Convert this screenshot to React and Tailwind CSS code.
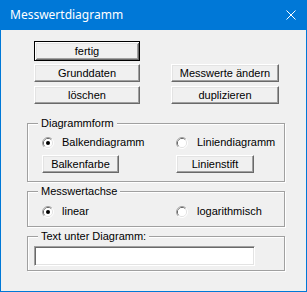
import React from "react";

const btn =
  "flex items-center justify-center h-[18px] border border-t-white border-l-white border-r-[#696969] border-b-[#696969] shadow-[inset_-1px_-1px_#a0a0a0,inset_1px_1px_#e3e3e3] bg-[#f0f0f0]";

const Radio = ({ checked }) => (
  <svg width="12" height="12" viewBox="0 0 12 12" className="shrink-0">
    <path d="M2.11 9.89 A5.5 5.5 0 0 1 9.89 2.11" fill="none" stroke="#a0a0a0" />
    <path d="M9.89 2.11 A5.5 5.5 0 0 1 2.11 9.89" fill="none" stroke="#ffffff" />
    <path d="M2.82 9.18 A4.5 4.5 0 0 1 9.18 2.82" fill="none" stroke="#696969" />
    <path d="M9.18 2.82 A4.5 4.5 0 0 1 2.82 9.18" fill="none" stroke="#e3e3e3" />
    <circle cx="6" cy="6" r="4" fill="#ffffff" />
    {checked && <circle cx="6" cy="6" r="2" fill="#000000" />}
  </svg>
);

const Group = ({ label, className, children }) => (
  <div
    className={`relative ml-[26px] w-[258px] border border-[#a0a0a0] shadow-[inset_1px_1px_#ffffff,1px_1px_#ffffff] ${className}`}
  >
    {/* legend sits over the top line */}
    <span className="absolute -top-[8px] left-[10px] bg-[#f0f0f0] px-[3px] leading-[14px]">
      {label}
    </span>
    {children}
  </div>
);

export default function App() {
  return (
    <div
      className="w-[307px] h-[292px] bg-[#0078d7] px-[1px] pb-[1px] flex flex-col text-[11px] text-black"
      style={{ fontFamily: '"Liberation Sans", Arial, sans-serif' }}
    >
      {/* Title bar */}
      <div className="h-[30px] flex items-center justify-between pl-[9px] pr-[10px] shrink-0">
        <span
          className="text-white text-[12px]"
          style={{ fontFamily: '"Noto Sans", "Open Sans", sans-serif' }}
        >
          Messwertdiagramm
        </span>
        <svg width="10" height="10" viewBox="0 0 10 10">
          <path d="M0.5 0.5 L9.5 9.5 M9.5 0.5 L0.5 9.5" stroke="#ffffff" strokeWidth="1" />
        </svg>
      </div>

      {/* Body */}
      <div className="flex-1 bg-[#f0f0f0] pt-[11px]">
        <div className="pl-[33px]">
          <div className="w-[106px] h-[20px] flex items-center justify-center border border-black bg-[#f0f0f0] shadow-[inset_1px_1px_#ffffff,inset_-1px_-1px_#696969,inset_2px_2px_#e3e3e3,inset_-2px_-2px_#a0a0a0]">
            fertig
          </div>
          <div className="flex mt-[3px] gap-[31px]">
            <div className={`${btn} w-[106px]`}>Grunddaten</div>
            <div className={`${btn} w-[108px]`}>Messwerte ändern</div>
          </div>
          <div className="flex mt-[4px] gap-[31px]">
            <div className={`${btn} w-[106px]`}>löschen</div>
            <div className={`${btn} w-[108px]`}>duplizieren</div>
          </div>
        </div>

        <Group label="Diagrammform" className="mt-[19px] h-[59px]">
          <div className="flex items-center h-[13px] mt-[12px] pl-[14px]">
            <div className="flex items-center w-[134px] gap-[8px]">
              <Radio checked />
              <span>Balkendiagramm</span>
            </div>
            <div className="flex items-center gap-[9px]">
              <Radio />
              <span>Liniendiagramm</span>
            </div>
          </div>
          <div className="flex mt-[6px] pl-[14px] gap-[57px]">
            <div className={`${btn} w-[77px]`}>Balkenfarbe</div>
            <div className={`${btn} w-[78px]`}>Linienstift</div>
          </div>
        </Group>

        <Group label="Messwertachse" className="mt-[9px] h-[36px]">
          <div className="flex items-center h-[13px] mt-[13px] pl-[14px]">
            <div className="flex items-center w-[134px] gap-[8px]">
              <Radio checked />
              <span>linear</span>
            </div>
            <div className="flex items-center gap-[9px]">
              <Radio />
              <span>logarithmisch</span>
            </div>
          </div>
        </Group>

        <Group label="Text unter Diagramm:" className="mt-[9px] h-[35px]">
          <div className="mt-[9px] ml-[6px] w-[221px] h-[20px] bg-white border border-t-[#a0a0a0] border-l-[#a0a0a0] border-r-white border-b-white shadow-[inset_1px_1px_#696969,inset_-1px_-1px_#e3e3e3]" />
        </Group>
      </div>
    </div>
  );
}
